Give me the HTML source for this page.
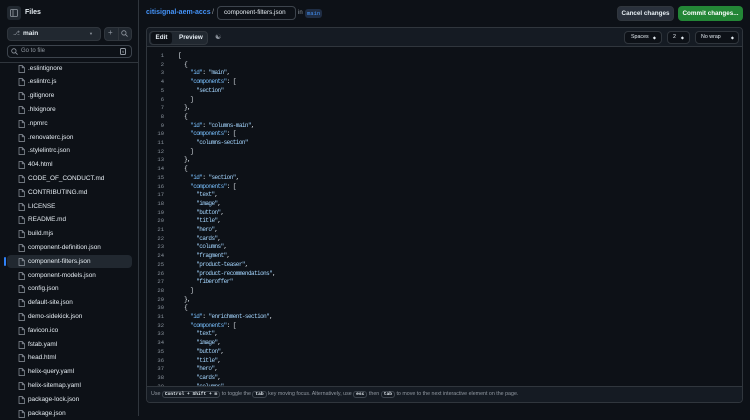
<!DOCTYPE html>
<html><head><meta charset="utf-8">
<style>
*{box-sizing:border-box;margin:0;padding:0}
body{width:750px;height:416px;overflow:hidden;background:#0d1117;font-family:"Liberation Sans",sans-serif;color:#e6edf3;position:relative}
.abs{position:absolute}
.side{left:0;top:0;width:139px;height:416px;border-right:1px solid #30363d}
.btn{position:absolute;border:1px solid #30363d;background:#212830;border-radius:4px}
.file{position:absolute;left:18px;font-size:6.4px;color:#e6edf3;height:12px;line-height:12px;white-space:nowrap}
.file svg{position:absolute;left:0;top:2px}
.file span{position:absolute;left:10px}
.code{position:absolute;left:146px;top:47px;width:597px;height:339px;overflow:hidden;font-family:"Liberation Mono",monospace;font-size:6px;letter-spacing:-0.56px}
.ln{position:absolute;height:8.7px;line-height:8.7px;white-space:pre}
.n{width:18px;left:0;text-align:right;color:#8b949e;font-size:5.5px;letter-spacing:0}
.t{left:32px;color:#e6edf3}
.k{color:#79c0ff}.s{color:#a5d6ff}
kbd{font-family:"Liberation Mono",monospace;font-size:4.6px;border:1px solid #3d444d;border-radius:3px;padding:0 2px;background:#151b23;color:#e6edf3;font-weight:bold}
</style></head><body>
<div class="abs side">
  <div class="abs" style="left:7px;top:6px;width:14px;height:14px;border-radius:3px;background:#212830"></div>
  <svg class="abs" style="left:10px;top:9px" width="8" height="8" viewBox="0 0 8 8"><rect x="0.5" y="0.5" width="7" height="7" rx="1" fill="none" stroke="#9198a1" stroke-width="0.8"/><line x1="3" y1="0.5" x2="3" y2="7.5" stroke="#9198a1" stroke-width="0.8"/></svg>
  <div class="abs" style="left:25px;top:9px;font-size:7px;font-weight:bold">Files</div>
  <div class="btn" style="left:7px;top:27px;width:94px;height:14px"></div>
  <div class="abs" style="left:13px;top:30px;font-size:6px;color:#9198a1">&#x2387;</div>
  <div class="abs" style="left:23px;top:30px;font-size:6.5px;font-weight:bold">main</div>
  <div class="abs" style="left:89px;top:31px;font-size:4px;color:#9198a1">▼</div>
  <div class="btn" style="left:104px;top:27px;width:28px;height:14px"></div>
  <div class="abs" style="left:118px;top:28px;width:1px;height:12px;background:#30363d"></div>
  <div class="abs" style="left:108px;top:28px;font-size:8px;color:#9198a1">+</div>
  <svg class="abs" style="left:121px;top:30px" width="7" height="7" viewBox="0 0 8 8"><circle cx="3.3" cy="3.3" r="2.5" fill="none" stroke="#9198a1" stroke-width="0.9"/><line x1="5.2" y1="5.2" x2="7.5" y2="7.5" stroke="#9198a1" stroke-width="0.9"/></svg>
  <div class="abs" style="left:7px;top:45px;width:125px;height:13px;border:1px solid #3d444d;border-radius:4px;background:#0d1117"></div>
  <svg class="abs" style="left:11px;top:48px" width="7" height="7" viewBox="0 0 8 8"><circle cx="3.3" cy="3.3" r="2.5" fill="none" stroke="#9198a1" stroke-width="0.9"/><line x1="5.2" y1="5.2" x2="7.5" y2="7.5" stroke="#9198a1" stroke-width="0.9"/></svg>
  <div class="abs" style="left:21px;top:48px;font-size:6px;color:#9198a1">Go to file</div>
  <div class="abs" style="left:120px;top:48px;width:6px;height:7px;border:1px solid #9198a1;border-radius:1.5px;font-size:4px;text-align:center;line-height:5px;color:#e6edf3">t</div>
  <div class="abs" style="left:0;top:62px;width:139px;height:1px;background:#30363d"></div>
  <div class="abs" style="left:7px;top:255px;width:125px;height:13px;background:#212830;border-radius:4px"></div>
  <div class="abs" style="left:4px;top:257px;width:2px;height:9px;background:#2f81f7;border-radius:1px"></div>
  <div id="files"></div>
</div>
<div class="abs" style="left:146px;top:9px;font-size:7px;color:#4493f8;font-weight:bold">citisignal-aem-accs</div>
<div class="abs" style="left:212px;top:9px;font-size:7px;color:#9198a1">/</div>
<div class="abs" style="left:217px;top:6px;width:79px;height:14px;border:1px solid #3d444d;border-radius:4px;font-size:6.3px;line-height:12px;padding-left:6px">component-filters.json</div>
<div class="abs" style="left:298px;top:10px;font-size:6px;color:#9198a1">in</div>
<div class="abs" style="left:305px;top:9px;height:9px;padding:0 2px;background:#1f2d44;border-radius:3px;font-family:'Liberation Mono',monospace;font-size:5.5px;line-height:9px;color:#4493f8">main</div>
<div class="btn" style="left:617px;top:6px;width:57px;height:15px;font-size:6.3px;font-weight:bold;text-align:center;line-height:13px;background:#2a313c">Cancel changes</div>
<div class="abs" style="left:678px;top:6px;width:65px;height:15px;border-radius:4px;background:#238636;font-size:6.3px;font-weight:bold;text-align:center;line-height:15px;color:#fff">Commit changes...</div>
<div class="abs" style="left:146px;top:27px;width:597px;height:376px;border:1px solid #30363d;border-radius:4px"></div>
<div class="abs" style="left:147px;top:28px;width:595px;height:19px;background:#151b23;border-bottom:1px solid #30363d;border-radius:4px 4px 0 0"></div>
<div class="abs" style="left:149px;top:31px;width:59px;height:14px;background:#212830;border-radius:4px;border:1px solid #30363d"></div>
<div class="abs" style="left:151px;top:32px;width:21px;height:12px;background:#0d1117;border-radius:3px;font-size:6.3px;font-weight:bold;text-align:center;line-height:12px">Edit</div>
<div class="abs" style="left:179px;top:32px;font-size:6.3px;font-weight:bold;line-height:12px">Preview</div>
<div class="abs" style="left:215px;top:33px;font-size:7px;color:#9198a1">&#9775;</div>
<div class="btn" style="left:624px;top:31px;width:38px;height:13px;background:#0d1117;font-size:5.3px;line-height:11px;padding-left:6px">Spaces<span style="position:absolute;right:5px;font-size:4px">◆</span></div>
<div class="btn" style="left:667px;top:31px;width:23px;height:13px;background:#0d1117;font-size:5.3px;line-height:11px;padding-left:5px">2<span style="position:absolute;right:5px;font-size:4px">◆</span></div>
<div class="btn" style="left:695px;top:31px;width:44px;height:13px;background:#0d1117;font-size:5.3px;line-height:11px;padding-left:5px">No wrap<span style="position:absolute;right:4px;font-size:4px">◆</span></div>
<div class="code" id="code"></div>
<div class="abs" style="left:147px;top:386px;width:595px;height:16px;background:#151b23;border-top:1px solid #30363d;border-radius:0 0 4px 4px;font-size:5.3px;color:#9198a1;line-height:15px;padding-left:4px;white-space:nowrap">Use <kbd>Control + Shift + m</kbd> to toggle the <kbd>tab</kbd> key moving focus. Alternatively, use <kbd>esc</kbd> then <kbd>tab</kbd> to move to the next interactive element on the page.</div>
<script>
var f=[".eslintignore",".eslintrc.js",".gitignore",".hlxignore",".npmrc",".renovaterc.json",".stylelintrc.json","404.html","CODE_OF_CONDUCT.md","CONTRIBUTING.md","LICENSE","README.md","build.mjs","component-definition.json","component-filters.json","component-models.json","config.json","default-site.json","demo-sidekick.json","favicon.ico","fstab.yaml","head.html","helix-query.yaml","helix-sitemap.yaml","package-lock.json","package.json"];
var h="";f.forEach(function(n,i){h+='<div class="file" style="top:'+(62.5+i*13.8)+'px"><svg width="7" height="8" viewBox="0 0 7 8"><path d="M1 0.5h3.2l2.3 2.3v4.7h-5.5z M4.2 0.5v2.3h2.3" fill="none" stroke="#9198a1" stroke-width="0.7"/></svg><span>'+n+'</span></div>'});
document.getElementById("files").innerHTML=h;
var L=['[','  {','    "id": "main",','    "components": [','      "section"','    ]','  },','  {','    "id": "columns-main",','    "components": [','      "columns-section"','    ]','  },','  {','    "id": "section",','    "components": [','      "text",','      "image",','      "button",','      "title",','      "hero",','      "cards",','      "columns",','      "fragment",','      "product-teaser",','      "product-recommendations",','      "fiberoffer"','    ]','  },','  {','    "id": "enrichment-section",','    "components": [','      "text",','      "image",','      "button",','      "title",','      "hero",','      "cards",','      "columns",'];
var c="";L.forEach(function(l,i){var t=l.replace(/("[^"]*")(:)/,'<span class="k">$1</span>$2').replace(/: ("[^"]*")/,': <span class="s">$1</span>').replace(/^(\s+)("[^"]*")(,?)$/,'$1<span class="s">$2</span>$3');
var top=5+i*8.7;c+='<div class="ln n" style="top:'+top+'px">'+(i+1)+'</div><div class="ln t" style="top:'+top+'px">'+t+'</div>'});
document.getElementById("code").innerHTML=c;
</script>
</body></html>
